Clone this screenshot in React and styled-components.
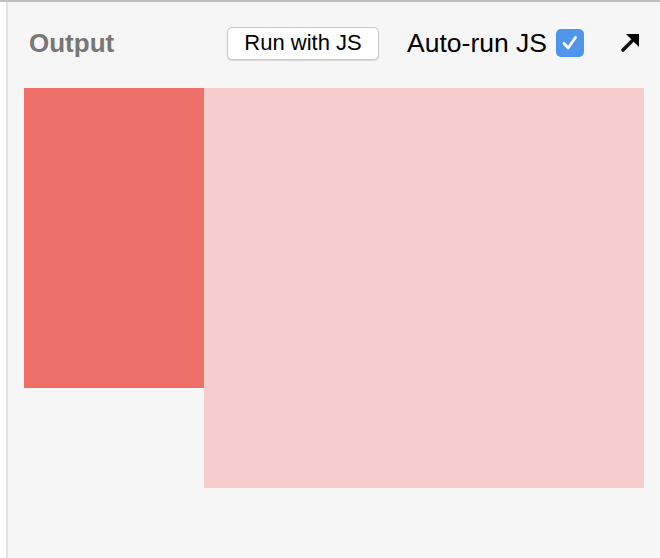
import React from "react";
import styled, { createGlobalStyle } from "styled-components";

const GlobalStyle = createGlobalStyle`
  html, body {
    margin: 0;
    padding: 0;
    background: #ffffff;
  }
  body {
    font-family: "Liberation Sans", Arial, sans-serif;
  }
`;

const Frame = styled.div`
  width: 660px;
  height: 558px;
  border-top: 2px solid #c0c0c0;
  box-sizing: border-box;
  display: flex;
  padding-left: 6px;
  background: #ffffff;
`;

const Panel = styled.section`
  flex: 1;
  border-left: 2px solid #e4e4e4;
  background: #f6f6f6;
  padding: 12px 16px 0 16px;
  display: flex;
  flex-direction: column;
`;

const Header = styled.div`
  height: 58px;
  display: flex;
  align-items: center;
  padding: 0 4px 0 5px;
  margin-bottom: 16px;
`;

const Title = styled.h2`
  margin: 0;
  flex: 1;
  font-size: 26px;
  font-weight: 700;
  color: #777777;
`;

const RunButton = styled.button`
  height: 33px;
  width: 152px;
  padding: 0;
  background: #ffffff;
  border: 1px solid #c9c9c9;
  border-radius: 5px;
  box-shadow: 0 1px 1px rgba(0, 0, 0, 0.12);
  font-family: "Liberation Sans", Arial, sans-serif;
  font-size: 22px;
  color: #000000;
`;

const AutoLabel = styled.label`
  margin-left: 28px;
  display: flex;
  align-items: center;
  gap: 9px;
  font-size: 26.5px;
  color: #000000;
`;

const Check = styled.span`
  width: 28px;
  height: 28px;
  border-radius: 5px;
  background: #4f95ea;
  display: flex;
  align-items: center;
  justify-content: center;
`;

const PopOut = styled.span`
  margin-left: 36px;
  width: 20px;
  height: 20px;
  display: flex;
`;

const Stage = styled.div`
  display: flex;
  align-items: flex-start;
`;

const Box = styled.div`
  width: ${(p) => p.w}px;
  height: ${(p) => p.h}px;
  background: ${(p) => p.color};
`;

export default function App() {
  return (
    <>
      <GlobalStyle />
      <Frame>
        <Panel>
          <Header>
            <Title>Output</Title>
            <RunButton type="button">Run with JS</RunButton>
            <AutoLabel>
              Auto-run JS
              <Check>
                <svg width="20" height="20" viewBox="0 0 20 20">
                  <path
                    d="M4 10.5 L8.2 15 L15.5 4.5"
                    fill="none"
                    stroke="#ffffff"
                    strokeWidth="2.8"
                    strokeLinecap="round"
                    strokeLinejoin="round"
                  />
                </svg>
              </Check>
            </AutoLabel>
            <PopOut>
              <svg width="20" height="20" viewBox="0 0 20 20">
                <path
                  d="M3 17 L12 8"
                  stroke="#111111"
                  strokeWidth="3.6"
                  strokeLinecap="round"
                />
                <polygon points="6,1 19,1 19,14" fill="#000000" />
              </svg>
            </PopOut>
          </Header>
          <Stage>
            <Box w={180} h={300} color="#ee7069" />
            <Box w={440} h={400} color="#f7cdcd" />
          </Stage>
        </Panel>
      </Frame>
    </>
  );
}
